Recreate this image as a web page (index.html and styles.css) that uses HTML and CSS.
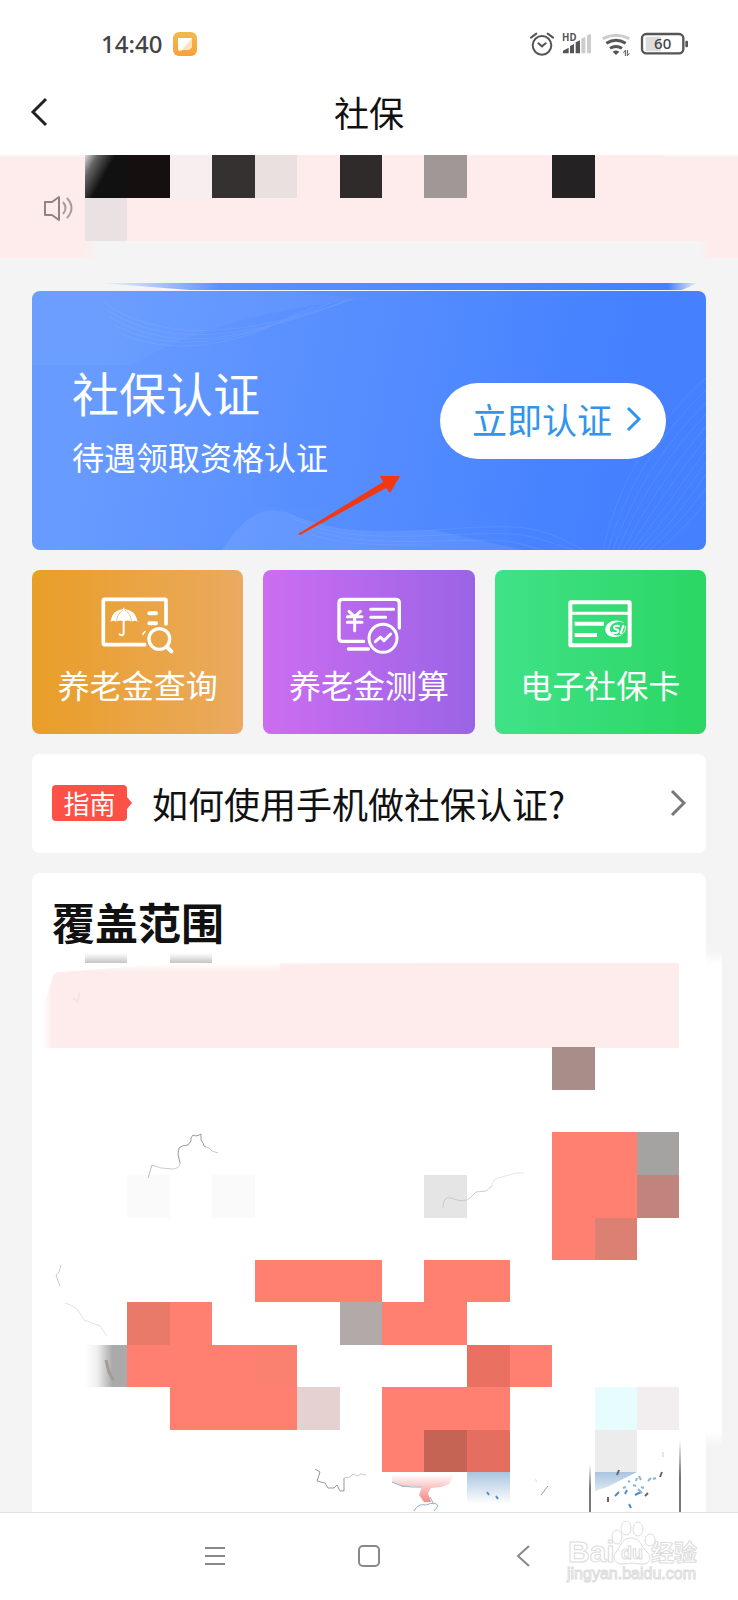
FILE: index.html
```html
<!DOCTYPE html>
<html lang="zh-CN">
<head>
    <meta charset="UTF-8">
    <meta name="viewport" content="width=device-width, initial-scale=1">
    <title>社保</title>
    <link rel="stylesheet" href="styles.css">
</head>
<body>
    <!-- 状态栏 -->
    <div class="status">
        <span class="time">14:40</span>
        <svg class="app" viewBox="0 0 24 24">
            <defs>
                <linearGradient id="app-bg" x1="0" y1="0" x2="0" y2="1"><stop offset="0" stop-color="#f3b94c"/><stop offset="1" stop-color="#f9a03a"/></linearGradient>
            </defs>
            <rect width="24" height="24" rx="6" fill="url(#app-bg)"/>
            <path d="M5 6h14v9l-3 3h-6l-4 1-1-2z" fill="#fff"/>
            <path d="M19 6v9l-3 3h-7z" fill="#ffe2b5"/>
        </svg>
        <svg class="signs" viewBox="84 62 486 78">
            <g fill="none" stroke="#555" stroke-width="6" stroke-linecap="round">
                <circle cx="126" cy="105" r="28"/>
                <path d="M115 99l11 9 11-9M93 82l16-12M143 70l16 12"/>
            </g>
            <text x="186" y="91" class="hd">HD</text>
            <path d="M189 129v-8l17-9v17zM210 129v-22l12-6v28zM227 129V96l13-6v39z" fill="#555"/>
            <path d="M244 129V85l12-6v50zM261 129V75l12-5v59z" fill="#ccc"/>
            <g fill="none" stroke-width="9">
                <path d="M308 85q40-20 80 0" stroke="#ccc"/>
                <path d="M319 99q29-18 58 0M330 114q18-11 36 0" stroke="#555"/>
            </g>
            <path d="M338 124q10-7 20 0l-10 10z" fill="#555"/>
            <path d="M370 127l6-7v17M388 129l-6 7v-17" fill="none" stroke="#555" stroke-width="3"/>
            <rect x="437" y="79" width="46" height="44" rx="4" fill="#ddd"/>
            <rect x="426" y="71" width="124" height="58" rx="13" fill="none" stroke="#555" stroke-width="7"/>
            <rect x="556" y="91" width="8" height="20" rx="3" fill="#555"/>
            <text x="488" y="116" class="power">60</text>
        </svg>
    </div>

    <header class="head">
        <button class="back" type="button" aria-label="返回">
            <svg viewBox="0 0 18 30"><path d="M16 2L3 15l13 13"/></svg>
        </button>
        <h1>社保</h1>
    </header>

    <!-- 通知 -->
    <svg class="notice" viewBox="0 155 738 136">
        <defs>
            <linearGradient id="fade"><stop offset="0" stop-color="#f4f4f4" stop-opacity="0"/><stop offset="1" stop-color="#f4f4f4"/></linearGradient>
            <linearGradient id="fade-r"><stop offset="0" stop-color="#f4f4f4"/><stop offset="1" stop-color="#f4f4f4" stop-opacity="0"/></linearGradient>
            <linearGradient id="edge"><stop offset="0" stop-color="#5b91fe" stop-opacity="0"/><stop offset=".2" stop-color="#5b91fe"/><stop offset=".95" stop-color="#4581ff"/><stop offset="1" stop-color="#4581ff" stop-opacity="0"/></linearGradient>
            <linearGradient id="corner" x1="0" y1="0" x2=".55" y2=".3"><stop offset="0" stop-color="#ddd"/><stop offset=".4" stop-color="#666"/><stop offset="1" stop-color="#111"/></linearGradient>
        </defs>
        <path d="M0 157h85v-2h580v2h73v101H0z" fill="#feecec"/>
        <path d="M98 241h602v18H98z" fill="#f4f4f4"/>
        <path d="M82 241h17v18H82z" fill="url(#fade)"/>
        <path d="M699 241h12v18h-12z" fill="url(#fade-r)"/>
        <rect x="85" y="155" width="43" height="43" fill="url(#corner)"/>
        <rect x="127" y="155" width="43" height="43" fill="#150f0f"/>
        <rect x="170" y="155" width="42" height="43" fill="#f7eeef"/>
        <rect x="212" y="155" width="43" height="43" fill="#353130"/>
        <rect x="255" y="155" width="42" height="43" fill="#eae0e0"/>
        <rect x="340" y="155" width="42" height="43" fill="#2f2b2a"/>
        <rect x="424" y="155" width="43" height="43" fill="#a09896"/>
        <rect x="552" y="155" width="43" height="43" fill="#242223"/>
        <rect x="85" y="198" width="42" height="43" fill="#e9e1e2"/>
        <g fill="none" stroke="#8f8484" stroke-width="2" stroke-linejoin="round">
            <path d="M59 197v23l-7-5h-7v-13h7z"/>
            <path d="M63 202q5 6 0 12M67 198q9 10 0 20" stroke="#a99c9c"/>
        </g>
        <path d="M100 283h598l-16 7H190z" fill="url(#edge)"/>
    </svg>

    <main class="main">
        <section class="banner">
            <svg class="wave" viewBox="0 0 674 259" preserveAspectRatio="xMidYMid slice">
                <path d="M100 74Q190 20 340 8L250 0H0v74z" fill="#fff" opacity=".03"/>
                <path d="M190 259q30-48 62-38c34 14 60 24 150 18l90 20z" fill="#fff" opacity=".07"/>
                <g fill="none" stroke="#fff" opacity=".07">
                    <path d="M70 10q80 60 250-2M74 18q80 55 240-8M78 26q80 50 220-14M82 34q80 42 200-18M86 42q80 34 180-20"/>
                    <path d="M252 221c34 14 60 24 150 18s100-6 150 20M262 228c34 14 60 20 150 16s80 0 130 15M272 236c34 12 60 16 140 14s60 0 100 9M280 244c34 10 60 10 120 10"/>
                    <path d="M571 259q22-100 103-172M576 259q25-90 98-160M581 259q28-82 93-148M586 259q30-74 88-136M591 259q34-66 83-124M596 259q36-58 78-112M601 259q38-50 73-100M606 259q38-42 68-88M612 259q32-30 62-76M618 259q28-24 56-62M626 259q24-18 48-48"/>
                </g>
                <path d="M368 185h-20l3 6-85 52 2 1 86-47 4 5z" fill="#f2380f"/>
            </svg>
            <div class="words">
                <h2>社保认证</h2>
                <p>待遇领取资格认证</p>
            </div>
            <button class="go" type="button">
                <span>立即认证</span>
                <svg viewBox="0 0 16 26"><path d="M2 2l11 11L2 24"/></svg>
            </button>
        </section>

        <nav class="tiles">
            <a class="tile orange" href="#query">
                <svg viewBox="52 42 240 192">
                    <path d="M192 194H72q-4 0-4-4V62q0-4 4-4h180q4 0 4 4v70" stroke-width="11"/>
                    <path d="M206 100h20M206 130h20" stroke-width="12"/>
                    <circle cx="236" cy="177" r="31" stroke-width="10"/>
                    <path d="M259 201l13 13" stroke-width="12"/>
                    <path d="M187 163q2-6 6-8" stroke-width="5"/>
                    <path d="M129 122v38q-2 10-12 3" stroke-width="6"/>
                    <path class="fill" d="M89 125q6-35 38-38v-4h4v4q34 3 40 38-10-6-18 0-12-7-24 0-11-7-22 0-8-6-18 0z"/>
                    <path d="M107 124q3-24 20-34M153 124q-3-24-20-34" stroke="#eaa542" stroke-width="2"/>
                </svg>
                <span>养老金查询</span>
            </a>
            <a class="tile purple" href="#estimate">
                <svg viewBox="26 42 240 192">
                    <path d="M130 184H66q-10 0-10-10V69q0-11 11-11h158q12 0 12 11v75M84 207h60" stroke-width="10"/>
                    <path d="M151 88h69M151 112h45M86 94l17 16 17-16M103 110v42M81 110h44M81 127h44" stroke-width="9"/>
                    <circle cx="188" cy="175" r="42" stroke-width="9"/>
                    <path d="M165 185l15-14 11 11 20-20" stroke-width="9"/>
                </svg>
                <span>养老金测算</span>
            </a>
            <a class="tile green" href="#card">
                <svg viewBox="32 42 240 192">
                    <rect x="63" y="67" width="178" height="129" rx="2" stroke-width="12"/>
                    <path d="M62 100h180" stroke-width="9"/>
                    <path class="fill" d="M76 125h88v12H76zM76 159h67v12H76z"/>
                    <path class="fill" d="M225 130c-17-16-57-8-57 19 0 23 35 28 52 14-13 5-36 4-38-14-1-19 25-29 43-19z"/>
                    <path d="M209 138q-15-3-15 5c0 6 13 3 13 10q-2 9-18 5M222 137l-8 23" stroke-width="6"/>
                    <path d="M220 161q10-8 8-22" stroke-width="3"/>
                </svg>
                <span>电子社保卡</span>
            </a>
        </nav>

        <a class="guide" href="#guide">
            <span class="tag">指南</span>
            <span class="ask">如何使用手机做社保认证?</span>
            <svg viewBox="0 0 16 28"><path d="M2 2l12 12L2 26"/></svg>
        </a>

        <section class="cover">
            <h2>覆盖范围</h2>
            <!-- 地图 -->
            <svg class="map" viewBox="32 953 674 559">
                <defs>
                    <linearGradient id="down" x1="0" y1="0" x2="0" y2="1"><stop offset="0" stop-color="#ccc" stop-opacity="0"/><stop offset="1" stop-color="#c4c4c4"/></linearGradient>
                    <linearGradient id="side"><stop offset="0" stop-color="#aaa" stop-opacity="0"/><stop offset=".3" stop-color="#aaa" stop-opacity=".2"/><stop offset=".65" stop-color="#aaa"/></linearGradient>
                    <linearGradient id="sea" x1="0" y1="0" x2="0" y2="1"><stop offset="0" stop-color="#a9c5df"/><stop offset="1" stop-color="#fff"/></linearGradient>
                    <linearGradient id="line" x1="0" y1="0" x2="0" y2="1"><stop offset="0" stop-color="#777" stop-opacity="0"/><stop offset=".5" stop-color="#777"/></linearGradient>
                    <linearGradient id="land" x1="0" y1="0" x2="0" y2="1"><stop offset="0" stop-color="#fff"/><stop offset=".6" stop-color="#f9b5b2"/><stop offset="1" stop-color="#f58a86"/></linearGradient>
                    <linearGradient id="pink"><stop offset="0" stop-color="#feecec" stop-opacity="0"/><stop offset="1" stop-color="#feecec"/></linearGradient>
                    <linearGradient id="pink-down" x1="0" y1="0" x2="0" y2="1"><stop offset="0" stop-color="#fff"/><stop offset="1" stop-color="#fff" stop-opacity="0"/></linearGradient>
                    <linearGradient id="spill" x1="0" y1="0" x2="0" y2="1"><stop offset="0" stop-color="#fff" stop-opacity="0"/><stop offset=".03" stop-color="#fff"/><stop offset=".97" stop-color="#fff"/><stop offset="1" stop-color="#fff" stop-opacity="0"/></linearGradient>
                </defs>
                <path d="M705 950h17v496h-17z" fill="url(#spill)"/>
                <path d="M85 953h42v10H85zM170 953h42v10h-42z" fill="url(#down)"/>
                <path d="M52 980q0-8 9-8l80-6q40-3 300-3h238v85H52z" fill="#feecec"/>
                <path d="M100 963h180v9H60z" fill="url(#pink-down)"/>
                <path d="M42 1010l10-30v68H42z" fill="url(#pink)"/>
                <path d="M79 993l-1 9-5-4" fill="none" stroke="#f8e2e2" stroke-width="2"/>

                <path d="M552 1132h85v86h-42v42h-43zM255 1260h127v42H255zM424 1260h86v42h-43v43h-85v-43h42zM170 1302h42v43h85v85H170v-43h-43v-42h43zM510 1345h42v42h-42zM382 1387h128v85H382z" fill="#ff8070"/>
                <path d="M552 1047h43v43h-43z" fill="#a98d88"/>
                <path d="M637 1132h42v43h-42z" fill="#a4a3a2"/>
                <path d="M637 1175h42v43h-42z" fill="#c0847d"/>
                <path d="M595 1218h42v42h-42z" fill="#dc8073"/>
                <path d="M127 1302h43v43h-43z" fill="#e97a6a"/>
                <path d="M255 1345h42v42h-42z" fill="#fa8070"/>
                <path d="M297 1387h43v43h-43z" fill="#e5d1cf"/>
                <path d="M340 1302h42v43h-42z" fill="#b1aaa8"/>
                <path d="M467 1345h43v42h-43z" fill="#ea7162"/>
                <path d="M424 1430h43v42h-43z" fill="#c56454"/>
                <path d="M467 1430h43v42h-43z" fill="#e46f60"/>
                <path d="M424 1175h43v43h-43z" fill="#e5e5e5"/>
                <path d="M127 1175h43v43h-43zM212 1175h43v43h-43z" fill="#fafafa"/>
                <path d="M595 1387h42v43h-42z" fill="#e7fdfd"/>
                <path d="M637 1387h42v43h-42z" fill="#f2eeef"/>
                <path d="M595 1430h42v42h-42z" fill="#ececec"/>
                <path d="M85 1345h42v42H85z" fill="url(#side)"/>
                <path d="M106 1360l3 12 4 8" fill="none" stroke="#a59a98" stroke-width="3"/>

                <g fill="none" stroke="#999" stroke-linejoin="round">
                    <path d="M148 1178l4-13 3 1" stroke="#bbb"/>
                    <path d="M155 1166l6 2 12 1q7-1 7-6" stroke="#ccc"/>
                    <path d="M180 1163l-2-9 1-6 3-2 6-1 3-4v-3l2-3 3 1 3-1 2-1v6l2 3 1 3 2 1"/>
                    <path d="M206 1147l3 1 3 3 6 2" stroke="#ccc"/>
                    <path d="M443 1208q0-12 8-10 14 6 20-1l5-5 10-1 6-5" stroke="#ccc"/>
                    <path d="M492 1186q0-8 10-9l14-4h8" stroke="#e6e6e6"/>
                    <path d="M61 1265l-2 7-3 3 2 6 2 5" stroke="#ccc"/>
                    <path d="M65 1303l6 2 7 5 6 10 16 6 7 10" stroke="#e2e2e2"/>
                    <path d="M315 1469l5 3-3 9 8 2 3 5h6l3-3 3 6h4v-13"/>
                    <path d="M344 1478l6-1 3-3 4 2 4-2 5 1" stroke="#ccc"/>
                    <path d="M535 1479l2 3" stroke="#ddd"/>
                    <path d="M541 1495l7-9"/>
                </g>

                <path d="M392 1474h62l-5 10-8 3-10 1-3 5 3 9h-7l-5-7 3-8-10-1-10 1-10-6z" fill="url(#land)"/>
                <path d="M392 1482l10 4 10 1 10 0M414 1511q4-8 12-6 10-4 12 1l-4 5M430 1497l3 6" fill="none" stroke="#8fb3cc"/>
                <path d="M467 1472h43v32h-43zM595 1472h42l-30 15-12 4z" fill="url(#sea)"/>
                <rect x="589" y="1464" width="2" height="48" fill="url(#line)"/>
                <rect x="679" y="1440" width="2" height="72" fill="url(#line)"/>
                <path d="M487 1492l2 3M496 1496l2 3M615 1496l4-4M625 1494l2-4M635 1495l6-3M629 1504l2 4" fill="none" stroke="#4d8dcc" stroke-width="2"/>
                <path d="M638 1489l4 4M633 1485l3 1M639 1476l2 4M648 1481l3-3M653 1479l3-1M623 1488l3-1M641 1487l3 1M628 1482l2-1M636 1481l1-3" fill="none" stroke="#8ab4e0" stroke-width="2"/>
                <path d="M608 1497v5M617 1475l2-5M660 1477l2-5M645 1496l3-3" stroke="#666" stroke-width="2"/>
                <path d="M663 1452v5" stroke="#ccc"/>
            </svg>
        </section>
    </main>

    <footer class="keys">
        <button type="button" aria-label="菜单"><svg viewBox="0 0 24 24"><path d="M2 3h20M2 11h20M2 19h20"/></svg></button>
        <button type="button" aria-label="主页"><svg viewBox="0 0 24 24"><rect x="2" y="1" width="20" height="20" rx="4"/></svg></button>
        <button type="button" aria-label="后退"><svg viewBox="0 0 24 24"><path d="M18 1L7 11l11 10"/></svg></button>
        <svg class="mark" viewBox="0 0 136 64">
            <g fill="#fff" stroke="#dcdcdc">
                <text x="2" y="41" class="big">Bai</text>
                <text x="85" y="40" class="cn">经验</text>
                <text x="1" y="58" class="url">jingyan.baidu.com</text>
                <ellipse cx="51" cy="16" rx="5" ry="7"/>
                <ellipse cx="60" cy="7" rx="5" ry="7"/>
                <ellipse cx="72" cy="8" rx="5" ry="7"/>
                <ellipse cx="84" cy="19" rx="5" ry="6"/>
                <path d="M65 17c-10 0-10 9-15 14-5 6 0 13 7 12q9-2 18 0c8 1 12-6 6-12-6-5-6-14-16-14z"/>
                <text x="55" y="38" class="du">du</text>
            </g>
        </svg>
    </footer>
</body>
</html>
```

FILE: styles.css
```css
* {
    box-sizing: border-box;
    margin: 0;
    padding: 0;
}

body {
    min-height: 100vh;
    display: flex;
    flex-direction: column;
    background: #f4f4f4;
    color: #111;
    font-family: "Noto Sans CJK SC", "Noto Sans", sans-serif;
}

a {
    color: inherit;
    text-decoration: none;
}

button {
    border: 0;
    background: none;
    font-family: inherit;
    cursor: pointer;
}

svg {
    display: block;
    flex: none;
}

/* 状态栏 */
.status {
    height: 72px;
    padding: 16px 48px 0 101px;
    display: flex;
    align-items: center;
    background: #fff;
}

.time {
    color: #444;
    font: 500 24px/32px "Noto Sans", sans-serif;
}

.app {
    width: 24px;
    height: 24px;
    margin-left: 11px;
}

.signs {
    width: 162px;
    height: 26px;
    margin-left: auto;
}

.hd {
    font: 700 29px "Noto Sans", sans-serif;
    fill: #555;
}

.power {
    font: 500 45px "Noto Sans", sans-serif;
    fill: #444;
    text-anchor: middle;
}

/* 标题 */
.head {
    height: 83px;
    padding: 0 28px 4px;
    display: grid;
    grid-template-columns: 40px 1fr 40px;
    align-items: center;
    background: #fff;
}

.head h1 {
    font-size: 35px;
    font-weight: 400;
    line-height: 52px;
    text-align: center;
}

.back svg {
    width: 18px;
    height: 30px;
    margin-left: 2px;
    fill: none;
    stroke: #222;
    stroke-width: 3;
}

.notice {
    width: 100%;
    height: auto;
}

.main {
    flex: 1;
    padding: 0 32px;
    display: flex;
    flex-direction: column;
    gap: 20px;
}

/* 认证 */
.banner {
    min-height: 259px;
    padding: 0 40px;
    display: flex;
    align-items: center;
    justify-content: space-between;
    position: relative;
    border-radius: 8px;
    overflow: hidden;
    background: linear-gradient(100deg, #689bff 10%, #4581ff 85%);
    color: #fff;
}

.wave {
    width: 100%;
    height: 100%;
    position: absolute;
    left: 0;
    top: 0;
}

.words,
.go {
    z-index: 1;
}

.words {
    padding-bottom: 6px;
}

.words h2 {
    margin-bottom: 8px;
    font-size: 47px;
    font-weight: 400;
    line-height: 68px;
}

.words p {
    font-size: 32px;
    line-height: 44px;
}

.go {
    height: 76px;
    padding: 0 24px 4px 32px;
    display: flex;
    align-items: center;
    gap: 14px;
    border-radius: 38px;
    background: #fff;
    color: #3294ea;
    font-size: 35px;
}

.go svg {
    width: 16px;
    height: 26px;
    fill: none;
    stroke: #3294ea;
    stroke-width: 3;
}

/* 三个入口 */
.tiles {
    display: grid;
    grid-template-columns: repeat(3, 1fr);
    gap: 20px;
}

.tile {
    padding: 24px 0 28px;
    display: flex;
    flex-direction: column;
    align-items: center;
    gap: 4px;
    border-radius: 8px;
    color: #fff;
    font-size: 32px;
    line-height: 44px;
}

.tile svg {
    width: 80px;
    height: 64px;
    fill: none;
    stroke: #fff;
    stroke-linecap: round;
    stroke-linejoin: round;
}

.tile .fill {
    fill: #fff;
    stroke: none;
}

.orange {
    background: linear-gradient(90deg, #e99e27, #eaaa60);
}

.purple {
    background: linear-gradient(90deg, #cd6df1, #9a64e5);
}

.green {
    background: linear-gradient(90deg, #40e288, #2bd663);
}

/* 指南 */
.guide {
    min-height: 99px;
    padding: 0 20px 2px;
    display: flex;
    align-items: center;
    border-radius: 8px;
    background: #fff;
}

.tag {
    width: 75px;
    position: relative;
    border-radius: 4px;
    background: #fb5147;
    color: #fff;
    font-size: 26px;
    line-height: 36px;
    text-align: center;
}

.tag::after {
    content: "";
    position: absolute;
    left: 100%;
    top: 12px;
    border: 6px solid transparent;
    border-left: 5px solid #fb5147;
    border-right: 0;
}

.ask {
    flex: 1;
    margin-left: 25px;
    font-size: 36px;
    line-height: 52px;
}

.guide svg {
    width: 16px;
    height: 28px;
    fill: none;
    stroke: #777;
    stroke-width: 3;
}

/* 覆盖范围 */
.cover {
    flex: 1;
    border-radius: 8px 8px 0 0;
    background: #fff;
}

.cover h2 {
    padding: 18px 20px 2px;
    font-size: 43px;
    line-height: 60px;
}

.map {
    width: 100%;
    height: auto;
    overflow: visible;
}

/* 底部按键 */
.keys {
    height: 88px;
    display: flex;
    justify-content: center;
    position: relative;
    border-top: 1px solid #e2e2e2;
    background: #fff;
}

.keys button {
    width: 154px;
    display: flex;
    align-items: center;
    justify-content: center;
}

.keys button svg {
    width: 24px;
    height: 24px;
    fill: none;
    stroke: #888;
    stroke-width: 2;
}

.mark {
    width: 136px;
    height: 64px;
    position: absolute;
    right: 36px;
    top: 8px;
}

.big {
    font: 700 30px "Liberation Sans", sans-serif;
}

.cn {
    font: 700 23px "Noto Sans CJK SC", sans-serif;
}

.du {
    font: 700 18px "Liberation Sans", sans-serif;
}

.url {
    font: 400 16px "Liberation Sans", sans-serif;
}
```
